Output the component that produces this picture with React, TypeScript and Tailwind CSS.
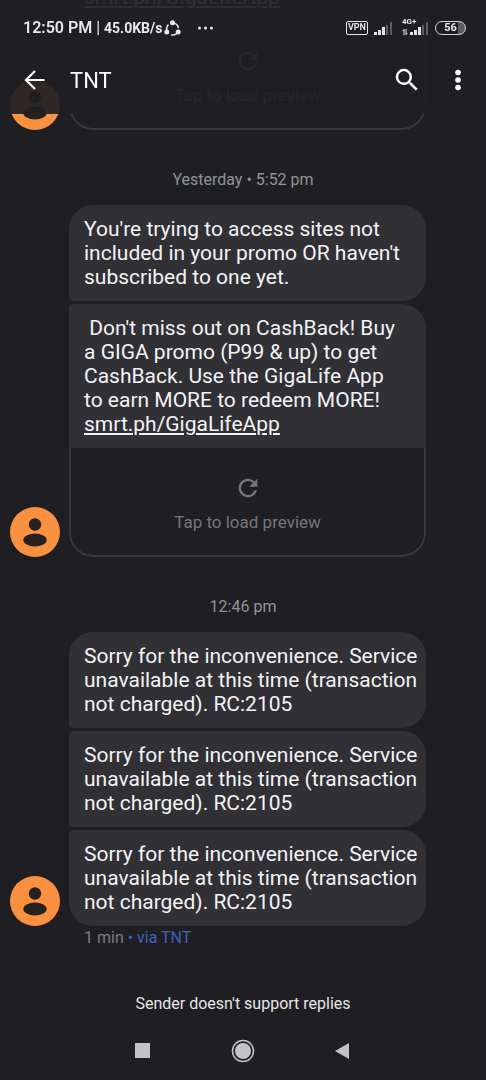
import React from "react";

type Message = {
  id: number;
  text?: string;
  link?: string;
  preview?: boolean;
};

type MessageGroup = {
  id: number;
  time?: string;
  messages: Message[];
};

const sorryText =
  "Sorry for the inconvenience. Service\nunavailable at this time (transaction\nnot charged). RC:2105";

const groups: MessageGroup[] = [
  {
    id: 1,
    messages: [{ id: 1, link: "smrt.ph/GigaLifeApp", preview: true }],
  },
  {
    id: 2,
    time: "Yesterday • 5:52 pm",
    messages: [
      {
        id: 2,
        text: "You're trying to access sites not\nincluded in your promo OR haven't\nsubscribed to one yet.",
      },
      {
        id: 3,
        text: " Don't miss out on CashBack! Buy\na GIGA promo (P99 & up) to get\nCashBack. Use the GigaLife App\nto earn MORE to redeem MORE!\n",
        link: "smrt.ph/GigaLifeApp",
        preview: true,
      },
    ],
  },
  {
    id: 3,
    time: "12:46 pm",
    messages: [
      { id: 4, text: sorryText },
      { id: 5, text: sorryText },
      { id: 6, text: sorryText },
    ],
  },
];

const Signal = () => (
  <svg width="18" height="13" viewBox="0 0 18 13" fill="#e4e4e6">
    <rect x="0" y="10" width="3" height="3" />
    <rect x="4" y="8" width="3" height="5" />
    <rect x="8" y="5" width="3" height="8" />
    <rect x="12" y="3" width="2" height="10" fill="#5c5c61" />
    <rect x="16" y="0" width="2" height="13" fill="#5c5c61" />
  </svg>
);

const StatusBar = () => (
  <div className="flex h-14 items-center pl-[23px] pr-5 text-[#e8e8ea]">
    <span className="text-base font-semibold whitespace-nowrap">
      12:50 PM <span className="font-normal">|</span>{" "}
      <span className="text-sm font-bold">45.0KB/s</span>
    </span>
    <svg className="ml-[2px]" width="17" height="17" viewBox="0 0 17 17">
      <circle
        cx="8.5"
        cy="9"
        r="6"
        fill="none"
        stroke="currentColor"
        strokeWidth="1.6"
        strokeDasharray="8.6 3.97"
        strokeDashoffset="-2"
      />
      <circle cx="8.5" cy="2.8" r="2.5" fill="currentColor" />
      <circle cx="2.8" cy="12" r="2.5" fill="currentColor" />
      <circle cx="14.2" cy="12" r="2.5" fill="currentColor" />
    </svg>
    <svg className="ml-4" width="18" height="4" viewBox="0 0 18 4" fill="currentColor">
      <circle cx="2.5" cy="2" r="1.5" />
      <circle cx="8.5" cy="2" r="1.5" />
      <circle cx="14.5" cy="2" r="1.5" />
    </svg>
    <div className="ml-auto flex items-center">
      <span className="flex h-[14px] w-[22px] items-center justify-center rounded-xs border border-current text-[9px] font-semibold">
        VPN
      </span>
      <span className="ml-[6px]">
        <Signal />
      </span>
      <div className="relative ml-[10px] flex items-end pl-2">
        <span className="absolute -top-1 left-0 text-[8px] leading-[8px] font-bold">
          4G+
        </span>
        <svg
          className="absolute bottom-0 left-0"
          width="6"
          height="6"
          viewBox="0 0 6 6"
          fill="none"
          stroke="currentColor"
        >
          <path d="M0.5 2L2 0.5V6M5.5 4L4 5.5V0" />
        </svg>
        <Signal />
      </div>
      <span className="ml-[7px] flex h-[14px] w-[31px] items-center justify-center rounded-full border border-[#d6d6d8] bg-linear-to-r from-transparent from-75% to-[#5c5c61] to-75% text-[11px] font-bold">
        56
      </span>
    </div>
  </div>
);

const Header = () => (
  <header className="fixed inset-x-0 top-0 z-10 h-[114px] bg-[#1f1f23]/93 text-white">
    <StatusBar />
    <div className="flex h-12 items-center pl-[23px] pr-4">
      <button aria-label="Back">
        <svg width="24" height="24" viewBox="0 0 24 24" fill="none" stroke="currentColor" strokeWidth="2.2">
          <path d="M21.5 12H3.5M12 3L3 12l9 9" />
        </svg>
      </button>
      <h1 className="ml-[23px] text-[22px]">TNT</h1>
      <button aria-label="Search" className="ml-auto">
        <svg width="30" height="30" viewBox="0 0 24 24" fill="currentColor">
          <path d="M15.5 14h-.79l-.28-.27A6.47 6.47 0 0 0 16 9.5 6.5 6.5 0 1 0 9.5 16c1.61 0 3.09-.59 4.23-1.57l.27.28v.79l5 4.99L20.49 19l-4.99-5zm-6 0C7.01 14 5 11.99 5 9.5S7.01 5 9.5 5 14 7.01 14 9.5 11.99 14 9.5 14z" />
        </svg>
      </button>
      <button aria-label="More options" className="ml-6">
        <svg width="24" height="24" viewBox="0 0 24 24" fill="currentColor">
          <circle cx="12" cy="4.5" r="2.8" />
          <circle cx="12" cy="12" r="2.8" />
          <circle cx="12" cy="19.5" r="2.8" />
        </svg>
      </button>
    </div>
  </header>
);

const Avatar = () => (
  <svg className="shrink-0" width="50" height="50" viewBox="0 0 50 50">
    <circle cx="25" cy="25" r="25" fill="#fa9140" />
    <circle cx="25" cy="17.5" r="6.2" fill="#27211f" />
    <ellipse cx="25" cy="33" rx="11.7" ry="6.5" fill="#27211f" />
  </svg>
);

const Bubble = ({ message, last }: { message: Message; last: boolean }) => (
  <div
    className={
      last
        ? "overflow-hidden rounded-3xl rounded-tl-[4px]"
        : "overflow-hidden rounded-r-3xl rounded-l-[4px] first:rounded-tl-3xl"
    }
  >
    <p className="bg-[#303035] py-3 pr-2 pl-[15px] text-[21px] leading-6 whitespace-pre-wrap text-[#f3f3f5]">
      {message.text}
      {message.link && (
        <a href="#" className="underline underline-offset-2">
          {message.link}
        </a>
      )}
    </p>
    {message.preview && (
      <button className="flex h-[109px] w-full flex-col items-center rounded-b-3xl border-2 border-t-0 border-[#38383c] pt-[26px] text-[#76767a]">
        <svg width="28" height="28" viewBox="0 0 24 24" fill="currentColor">
          <path d="M17.65 6.35A7.96 7.96 0 0 0 12 4a8 8 0 1 0 7.73 10h-2.08A6 6 0 1 1 12 6c1.66 0 3.14.69 4.22 1.78L13 11h7V4z" />
        </svg>
        <span className="mt-2 text-[17px] leading-6">Tap to load preview</span>
      </button>
    )}
  </div>
);

const Group = ({ group }: { group: MessageGroup }) => (
  <section className="shrink-0">
    {group.time && (
      <div className="h-[75px] pt-10 text-center text-base leading-5 text-[#909498]">
        {group.time}
      </div>
    )}
    <div className="flex items-end gap-[9px] pl-[10px] pr-[60px]">
      <Avatar />
      <div className="flex min-w-0 flex-1 flex-col gap-[3px]">
        {group.messages.map((message, index) => (
          <Bubble
            key={message.id}
            message={message}
            last={index === group.messages.length - 1}
          />
        ))}
      </div>
    </div>
  </section>
);

const NavBar = () => (
  <nav className="flex h-[58px] items-center justify-center gap-[76px] text-[#c3c2c6]">
    <button aria-label="Recent apps">
      <svg width="24" height="24" viewBox="0 0 24 24" fill="currentColor">
        <rect x="4" y="4" width="15" height="15" />
      </svg>
    </button>
    <button aria-label="Home">
      <svg width="24" height="24" viewBox="0 0 24 24">
        <circle cx="12" cy="12" r="10.5" fill="none" stroke="currentColor" strokeWidth="1.5" />
        <circle cx="12" cy="12" r="8" fill="currentColor" />
      </svg>
    </button>
    <button aria-label="Back">
      <svg width="24" height="24" viewBox="0 0 24 24" fill="currentColor">
        <path d="M4 12L18 4v16z" />
      </svg>
    </button>
  </nav>
);

export default function App() {
  return (
    <div className="flex h-screen flex-col bg-[#1f1f23] font-['Roboto',sans-serif]">
      <Header />
      <main className="flex min-h-0 flex-1 flex-col justify-end overflow-hidden">
        {groups.map((group) => (
          <Group key={group.id} group={group} />
        ))}
        <p className="shrink-0 pt-[2px] pl-[84px] text-base leading-5 text-[#7d7d81]">
          1 min <span className="text-[#3e62b8]">• via TNT</span>
        </p>
      </main>
      <footer>
        <p className="pt-[46px] pb-2 text-center text-base leading-5 text-[#e6e6e8]">
          Sender doesn't support replies
        </p>
        <NavBar />
      </footer>
    </div>
  );
}
